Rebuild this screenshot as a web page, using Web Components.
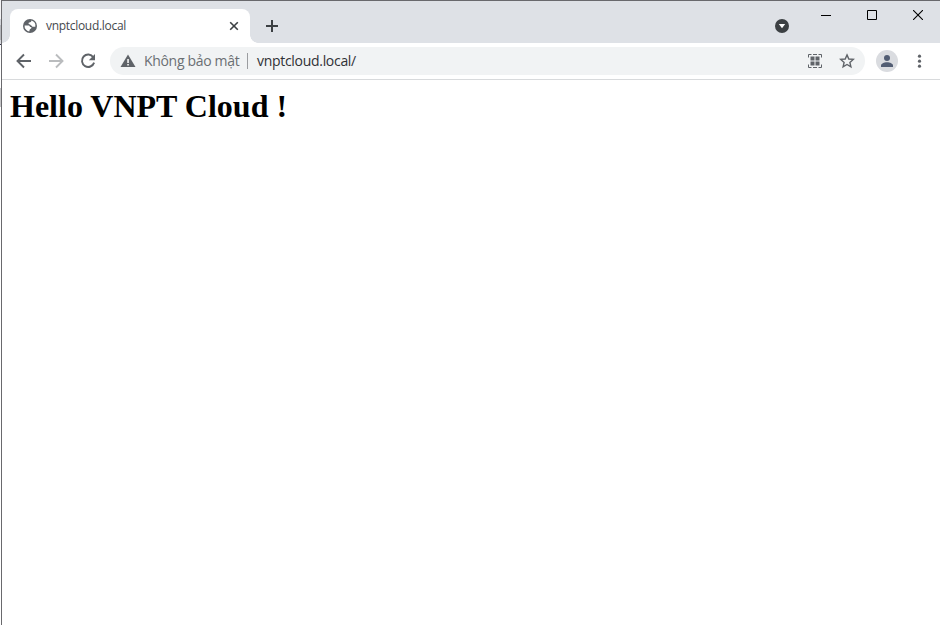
<!DOCTYPE html>
<html lang="vi"><head><meta charset="utf-8"><title>vnptcloud.local</title>
<style>html,body{margin:0;height:100%;overflow:hidden;background:#fff}</style></head>
<body>
<browser-window>
<browser-tabs slot="tabs">vnptcloud.local</browser-tabs>
<browser-toolbar slot="toolbar"><span slot="status">Không bảo mật</span><span slot="url">vnptcloud.local/</span></browser-toolbar>
<page-heading>Hello VNPT Cloud !</page-heading>
</browser-window>
<script>
const define=(name,html)=>customElements.define(name,class extends HTMLElement{
 constructor(){super();this.attachShadow({mode:'open'}).innerHTML=html;}
});
define('ui-icon','<style>:host{display:block;flex:none;line-height:0}</style><slot></slot>');
define('browser-window',`<style>
:host{display:grid;grid-template-columns:1px 1fr;height:100vh;background:#fff}
.edge{background:linear-gradient(#f4f4f6 0 19px,#d3d5da 19px 25px,#b5b7bc 25px 40px,#d8dade 40px 44px,#32324a 44px 45px,#fff 45px 88px,#c5c5c7 88px 107px,#fff 107px)}
.win{box-sizing:border-box;border-left:1px solid #69696d;border-top:1px solid #69696d;display:flex;flex-direction:column;min-width:0}
</style><div class="edge"></div><div class="win"><slot name="tabs"></slot><slot name="toolbar"></slot><slot></slot></div>`);
define('page-heading',`<style>:host{display:block;padding:8px}
h1{margin:0;font:bold 32px/37px "Liberation Serif",serif;color:#000;white-space:nowrap}</style><h1><slot></slot></h1>`);
define('browser-tabs',`<style>
:host{display:flex;height:42px;background:#dee1e6;font-family:"Open Sans",sans-serif}
.left{width:8px;background:radial-gradient(circle at 0 0,transparent 7.5px,#fff 8px) left bottom/8px 8px no-repeat}
.tab{box-sizing:border-box;margin-top:8px;width:240px;height:34px;background:#fff;border-radius:8px 8px 0 0;display:flex;align-items:center;padding:0 10px 0 13px}
.title{margin-left:9px;font-size:12px;line-height:16px;letter-spacing:-.3px;color:#45494d;white-space:nowrap;flex:1}
.right{width:8px;background:radial-gradient(circle at 100% 0,transparent 7.5px,#fff 8px) left bottom/8px 8px no-repeat}
.plus{margin:19px 0 0 8px}.space{flex:1}.drop{margin:18px 32px 0 0}.controls{display:flex;gap:36px;padding:9px 17px 0 0}
</style><div class="left"></div><div class="tab">
<ui-icon><svg width="14" height="14" viewBox="0 0 14 14"><circle cx="7" cy="7" r="7" fill="#5f6368"/><path d="M8.4 1.6C8.3 3.1 7.6 3.3 6.3 3.4 5.2 3.5 5.4 5 6.3 5.2 7.5 5.4 7.7 6.5 8.7 6.7L9.4 7.8h2.9A5.5 5.5 0 0 0 8.4 1.6zM1.6 6.4h3.5c1.3 0 1.9.7 1.9 1.7h1.3c.5 1.1-.2 1.7-1.1 1.8-.7.2-.5 1.8-1 2.5A5.5 5.5 0 0 1 1.6 6.4z" fill="#fff"/></svg></ui-icon>
<span class="title"><slot></slot></span>
<ui-icon><svg width="12" height="12" viewBox="0 0 12 12"><path d="M2.2 2.2l7.6 7.6M9.8 2.2L2.2 9.8" stroke="#3c4043" stroke-width="1.6"/></svg></ui-icon></div><div class="right"></div>
<ui-icon class="plus"><svg width="12" height="12"><path d="M0 6h12M6 0v12" stroke="#3c4043" stroke-width="2"/></svg></ui-icon><div class="space"></div>
<ui-icon class="drop"><svg width="14" height="14"><circle cx="7" cy="7" r="7" fill="#3c4043"/><path d="M3.8 5h6.4L7 9.3z" fill="#fff"/></svg></ui-icon>
<div class="controls">
<ui-icon><svg width="10" height="10"><path d="M0 5.5h10" stroke="#000" shape-rendering="crispEdges"/></svg></ui-icon>
<ui-icon><svg width="10" height="10"><path d="M.5.5h9v9h-9z" fill="none" stroke="#000"/></svg></ui-icon>
<ui-icon><svg width="10" height="10"><path d="M0 0l10 10M10 0L0 10" stroke="#000" stroke-width="1.1"/></svg></ui-icon></div>`);
define('browser-toolbar',`<style>
:host{box-sizing:border-box;display:flex;align-items:center;height:37px;border-bottom:1px solid #d8dadc;padding:0 13px 0 14px;font-family:"Open Sans",sans-serif;background:#fff}
.nav{display:flex;gap:16px}.box{box-sizing:border-box;flex:1;height:28px;border-radius:14px;background:#f1f3f4;margin-left:14px;display:flex;align-items:center;padding:0 10px}
.status,.url{font-size:14px;line-height:20px;white-space:nowrap}.status{width:95px;margin-left:8px;letter-spacing:-.32px;color:#6b6f73}.sep{width:1px;height:16px;background:#9b9da0;margin:0 9px 0 8px}.url{color:#303134;letter-spacing:-.3px;flex:1}
.qr{margin-right:17px}.avatar{margin:0 13px 0 11px}
</style><div class="nav">
<ui-icon><svg width="16" height="16"><path d="M15 8H2M8 1.5L1.5 8 8 14.5" fill="none" stroke="#5f6368" stroke-width="1.9"/></svg></ui-icon>
<ui-icon><svg width="16" height="16"><path d="M1 8h13M8 1.5L14.5 8 8 14.5" fill="none" stroke="#babcbe" stroke-width="1.9"/></svg></ui-icon>
<ui-icon><svg width="16" height="16"><path d="M13.3 4.2A6.2 6.2 0 1 0 14.1 9.6" fill="none" stroke="#5f6368" stroke-width="1.9"/><path d="M15 1v6.2H8.8z" fill="#5f6368"/></svg></ui-icon></div>
<div class="box"><ui-icon><svg width="16" height="16"><path d="M8 1.5L15.5 14H.5z" fill="#5f6368"/><path d="M7.3 6h1.5v4H7.3zm0 5h1.5v1.5H7.3z" fill="#fff"/></svg></ui-icon>
<span class="status"><slot name="status"></slot></span><span class="sep"></span><span class="url"><slot name="url"></slot></span>
<ui-icon class="qr"><svg width="14" height="14"><path d="M.5 3.5v-3h3M5 .5h4M10.5 .5h3v3M13.5 10.5v3h-3M9 13.5H5M3.5 13.5h-3v-3" fill="none" stroke="#5f6368"/><path d="M2.5 2.5h4v4h-4zM7.5 2.5h4v4h-4zM2.5 7.5h4v4h-4zM7.5 7.5h4v4h-4z" fill="#5f6368"/></svg></ui-icon>
<ui-icon><svg width="16" height="16"><path d="M8 1.9l1.8 4.1 4.5.4-3.4 3 1 4.4L8 11.5l-3.9 2.3 1-4.4-3.4-3 4.5-.4z" fill="none" stroke="#5f6368" stroke-width="1.4"/></svg></ui-icon></div>
<ui-icon class="avatar"><svg width="22" height="22"><circle cx="11" cy="11" r="11" fill="#dadce0"/><circle cx="11" cy="8" r="3" fill="#525d73"/><path d="M5 17v-1.5C5 13.5 8 12.2 11 12.2s6 1.3 6 3.3V17z" fill="#525d73"/></svg></ui-icon>
<ui-icon><svg width="16" height="16"><g fill="#5f6368"><circle cx="8.5" cy="3.2" r="1.6"/><circle cx="8.5" cy="8.2" r="1.6"/><circle cx="8.5" cy="13.2" r="1.6"/></g></svg></ui-icon>`);
</script></body></html>
